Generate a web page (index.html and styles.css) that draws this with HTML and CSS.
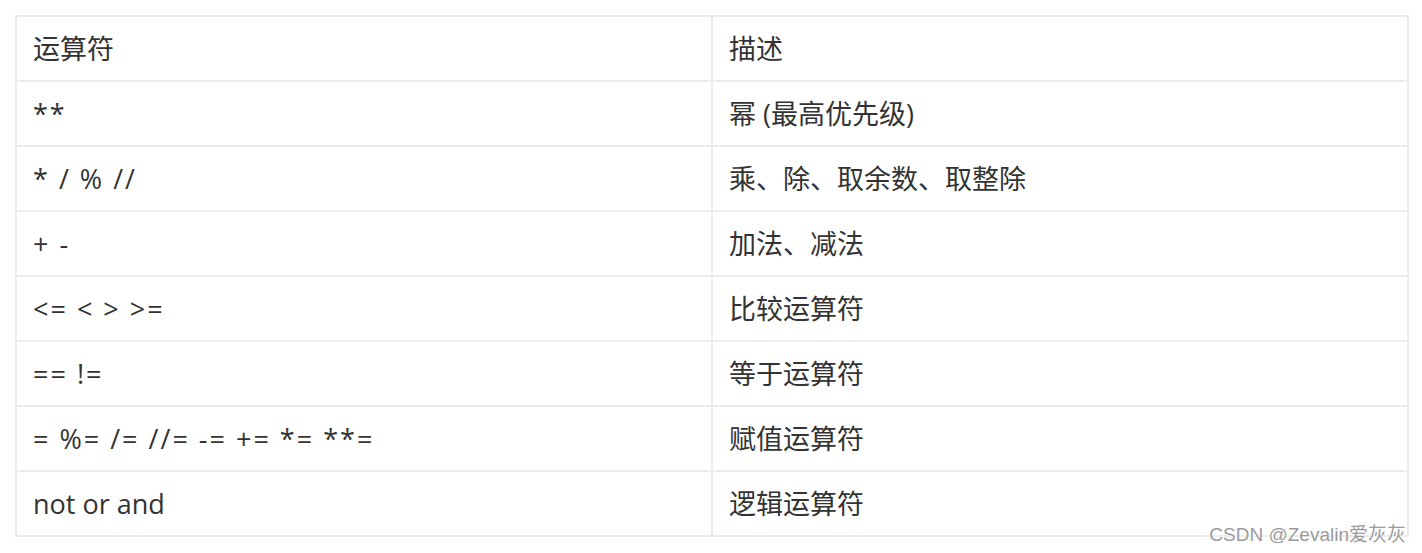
FILE: index.html
```html
<!DOCTYPE html>
<html lang="zh">
<head>
<meta charset="utf-8">
<link rel="stylesheet" href="styles.css">
</head>
<body>
<div class="page">
  <table class="ops">
    <colgroup><col class="c1"><col class="c2"></colgroup>
    <tr><td>运算符</td><td>描述</td></tr>
    <tr><td class="op">**</td><td>幂 (最高优先级)</td></tr>
    <tr><td class="op">* / % //</td><td>乘、除、取余数、取整除</td></tr>
    <tr><td class="op">+ -</td><td>加法、减法</td></tr>
    <tr><td class="op">&lt;= &lt; &gt; &gt;=</td><td>比较运算符</td></tr>
    <tr><td class="op">== !=</td><td>等于运算符</td></tr>
    <tr><td class="op">= %= /= //= -= += *= **=</td><td>赋值运算符</td></tr>
    <tr><td>not or and</td><td>逻辑运算符</td></tr>
  </table>
  <div class="mark">CSDN @Zevalin爱灰灰</div>
</div>
</body>
</html>
```
FILE: styles.css
```css
html, body {
  margin: 0;
  padding: 0;
  background: #ffffff;
}
.page {
  position: relative;
  width: 1422px;
  height: 553px;
  padding: 15px 0 0 15px;
  box-sizing: border-box;
}
.ops {
  border-collapse: collapse;
  table-layout: fixed;
  width: 1392px;
  font-family: "Open Sans", "Noto Sans CJK SC", sans-serif;
  font-size: 27px;
  color: #333333;
}
.c1 { width: 696px; }
.c2 { width: 696px; }
.ops td {
  border: 2px solid #ececec;
  height: 63px;
  padding: 0 0 0 16px;
  vertical-align: middle;
  white-space: pre;
  line-height: 1;
}
.ops td.op {
  letter-spacing: 2px;
}
.mark {
  position: absolute;
  right: 16px;
  bottom: 7px;
  font-family: "Liberation Sans", "Noto Sans CJK SC", sans-serif;
  font-size: 19px;
  color: #9a9a9a;
  text-shadow: 0 0 2px #ffffff, 0 0 2px #ffffff;
}
```
